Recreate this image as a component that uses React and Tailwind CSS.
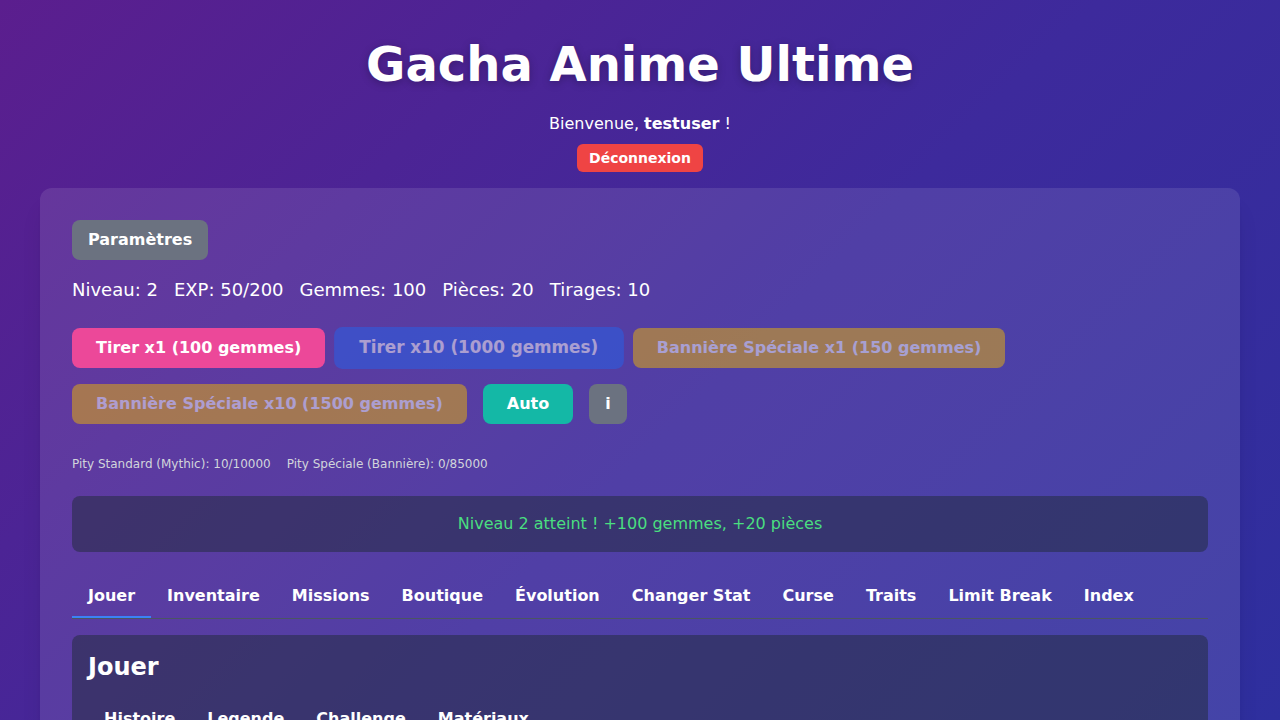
import { useState } from "react";

const tabs = ["Jouer", "Inventaire", "Missions", "Boutique", "Évolution", "Changer Stat", "Curse", "Traits", "Limit Break", "Index"];
const subTabs = ["Histoire", "Legende", "Challenge", "Matériaux"];

function App() {
  const [activeTab, setActiveTab] = useState("Jouer");
  const [activeSub, setActiveSub] = useState("Histoire");

  return (
    <div className="min-h-screen bg-fixed bg-[linear-gradient(135deg,#5b1e8e_0%,#3d2a9c_55%,#2e2f9e_100%)] font-['DejaVu_Sans',sans-serif] text-white pt-10 pb-10">
      <h1 className="text-center text-5xl font-bold leading-[48px] [text-shadow:0_2px_8px_rgba(0,0,0,0.25)]">
        Gacha Anime Ultime
      </h1>
      <p className="mt-6 text-center text-base leading-6">
        Bienvenue, <span className="font-bold">testuser</span> !
      </p>
      <div className="mt-2 flex justify-center">
        <button className="rounded-md bg-[#ef4444] px-3 py-1 text-sm font-bold text-white">Déconnexion</button>
      </div>

      <div className="mx-10 mt-4 rounded-xl bg-white/10 p-8 shadow-xl">
        <button className="rounded-lg bg-[#6b7280] px-4 py-2 font-bold">Paramètres</button>

        <div className="mt-4 flex gap-4 text-lg leading-7">
          <span>Niveau: 2</span>
          <span>EXP: 50/200</span>
          <span>Gemmes: 100</span>
          <span>Pièces: 20</span>
          <span>Tirages: 10</span>
        </div>

        <div className="mt-6 flex flex-wrap gap-4">
          <button className="rounded-lg bg-[#ec4899] px-6 py-2 font-bold">Tirer x1 (100 gemmes)</button>
          <button disabled className="scale-105 rounded-lg bg-[#2563eb] px-6 py-2 font-bold opacity-50">Tirer x10 (1000 gemmes)</button>
          <button disabled className="rounded-lg bg-[#eab308] px-6 py-2 font-bold opacity-50">Bannière Spéciale x1 (150 gemmes)</button>
          <button disabled className="rounded-lg bg-[#eab308] px-6 py-2 font-bold opacity-50">Bannière Spéciale x10 (1500 gemmes)</button>
          <button className="rounded-lg bg-[#14b8a6] px-6 py-2 font-bold">Auto</button>
          <button className="rounded-lg bg-[#6b7280] px-4 py-2 font-bold">i</button>
        </div>

        <div className="mt-8 flex gap-4 text-xs leading-4 text-[#d1d5db]">
          <span>Pity Standard (Mythic): 10/10000</span>
          <span>Pity Spéciale (Bannière): 0/85000</span>
        </div>

        <div className="mt-6 rounded-lg bg-[#1f2937]/50 p-4 text-center leading-6 text-[#4ade80]">
          Niveau 2 atteint ! +100 gemmes, +20 pièces
        </div>

        <div className="mt-6 flex border-b border-[#4b5563]">
          {tabs.map((t) => (
            <button
              key={t}
              onClick={() => setActiveTab(t)}
              className={
                t === activeTab
                  ? "border-b-2 border-[#3b82f6] px-4 py-2 font-bold leading-6"
                  : "border-b-2 border-transparent px-4 py-2 font-bold leading-6"
              }
            >
              {t}
            </button>
          ))}
        </div>

        <div className="mt-4 rounded-lg bg-[#1f2937]/50 p-4">
          <h2 className="text-2xl font-bold leading-8">{activeTab}</h2>
          <div className="mt-4 flex">
            {subTabs.map((s) => (
              <button
                key={s}
                onClick={() => setActiveSub(s)}
                className={
                  s === activeSub
                    ? "border-b-2 border-[#3b82f6] px-4 py-2 font-bold leading-6"
                    : "border-b-2 border-transparent px-4 py-2 font-bold leading-6"
                }
              >
                {s}
              </button>
            ))}
          </div>
          <div className="mt-4 h-40"></div>
        </div>
      </div>
    </div>
  );
}

export default App;
